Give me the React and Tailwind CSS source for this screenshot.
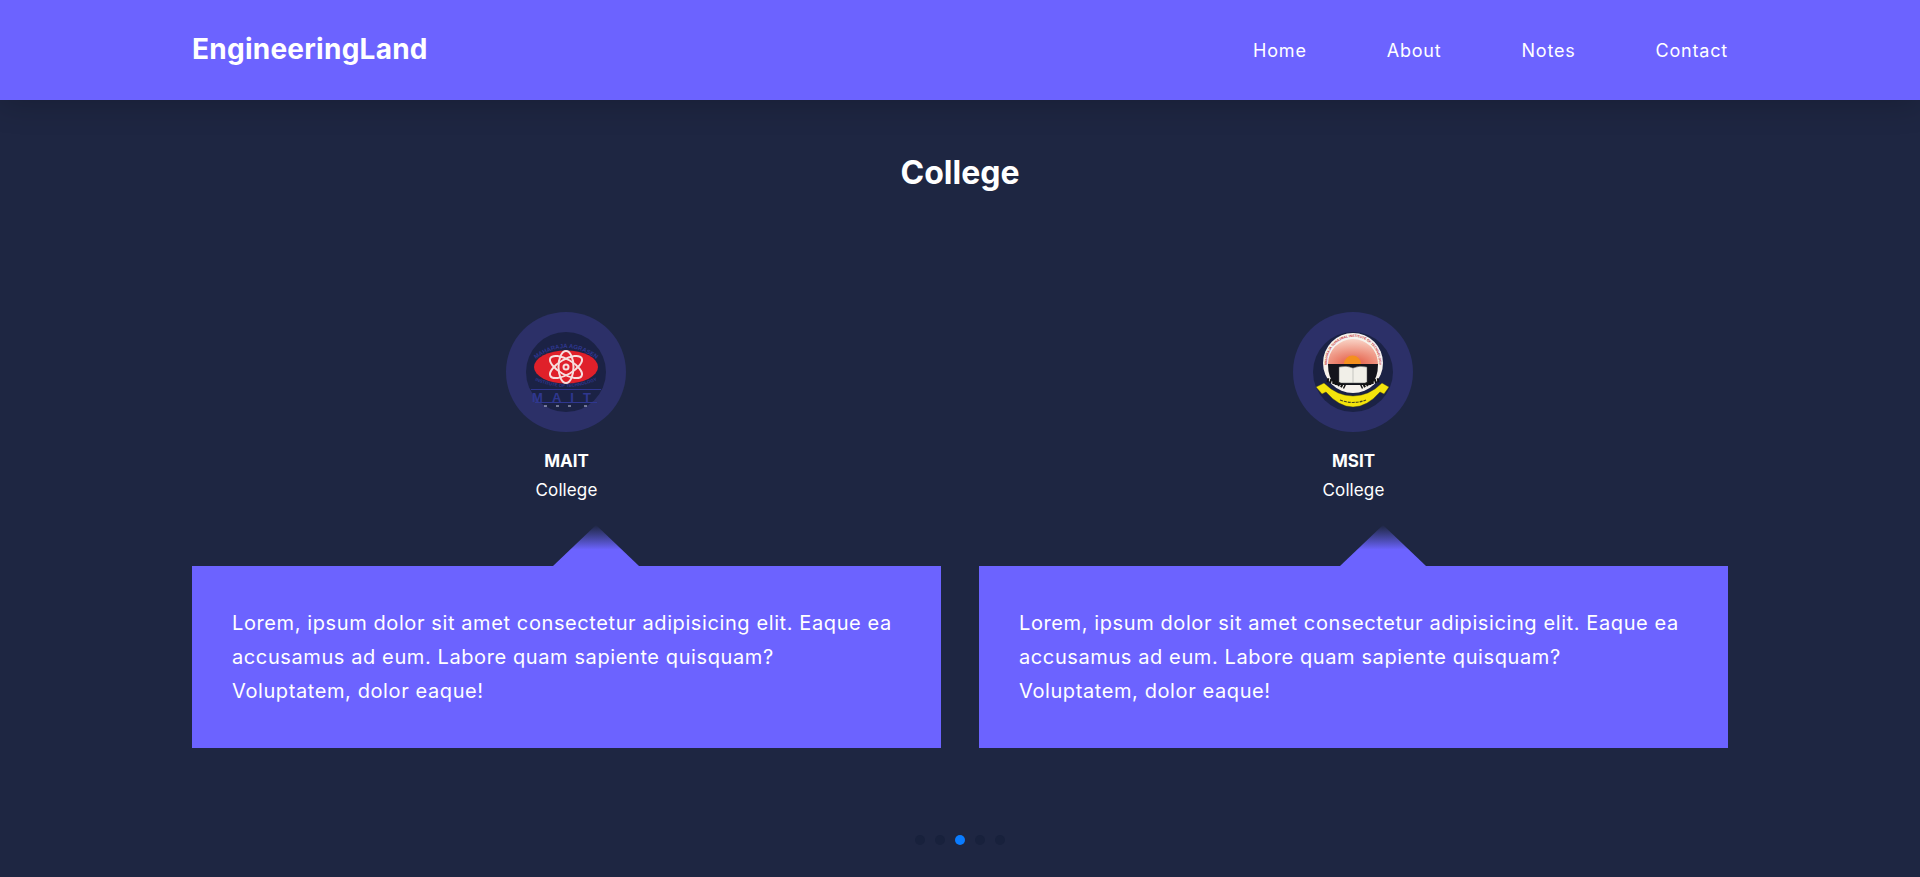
import React from "react";

const FONT = "font-['Inter','Noto_Sans',sans-serif]";

const NAV = ["Home", "About", "Notes", "Contact"];

const COLLEGES = [
  { name: "MAIT", logo: MaitLogo },
  { name: "MSIT", logo: MsitLogo },
];

function MaitLogo() {
  return (
    <svg viewBox="0 0 80 80" className="w-20 h-20">
      <circle cx="40" cy="40" r="40" fill="#1b2245" />
      <path id="mait-top" d="M6 30 Q40 2 74 30" fill="none" />
      <text fontSize="6" fontWeight="700" fill="#2f378f" fontFamily="Liberation Sans, sans-serif">
        <textPath href="#mait-top" startOffset="50%" textAnchor="middle">MAHARAJA AGRASEN</textPath>
      </text>
      <path id="mait-bottom" d="M8 48 Q40 62 72 48" fill="none" />
      <text fontSize="4.5" fontWeight="700" fill="#2f378f" fontFamily="Liberation Sans, sans-serif">
        <textPath href="#mait-bottom" startOffset="50%" textAnchor="middle">INSTITUTE OF TECHNOLOGY</textPath>
      </text>
      <ellipse cx="40" cy="35" rx="32" ry="16.5" fill="#e0202a" />
      <g fill="none" stroke="#f6dede" strokeWidth="2">
        <ellipse cx="40" cy="35" rx="7.5" ry="16" />
        <ellipse cx="40" cy="35" rx="7.5" ry="18" transform="rotate(60 40 35)" />
        <ellipse cx="40" cy="35" rx="7.5" ry="18" transform="rotate(-60 40 35)" />
        <circle cx="40" cy="35" r="2.5" />
      </g>
      <rect x="5" y="57" width="70" height="1" fill="#2f378f" />
      <text x="40" y="69.5" textAnchor="middle" fontSize="13" fontWeight="700" letterSpacing="9" fill="#2f378f" fontFamily="Liberation Sans, sans-serif">MAIT</text>
      <rect x="9" y="70" width="62" height="1" fill="#2f378f" />
      <path d="M18 74 h3 M30 74 h3 M42 74 h3 M58 74 h3" stroke="#c8cbe8" strokeWidth="1" />
    </svg>
  );
}

function MsitLogo() {
  return (
    <svg viewBox="0 0 80 80" className="w-20 h-20">
      <defs>
        <radialGradient id="msit-sky" cx="50%" cy="100%" r="100%">
          <stop offset="20%" stopColor="#e8705a" />
          <stop offset="100%" stopColor="#f9d3c6" />
        </radialGradient>
      </defs>
      <circle cx="40" cy="40" r="40" fill="#1b2245" />
      <circle cx="40" cy="31" r="30" fill="#f7f2ed" />
      <path d="M15 32 A25 25 0 0 1 65 32 Z" fill="url(#msit-sky)" />
      <path id="msit-ring" d="M15 38 A26 26 0 1 1 65 38" fill="none" />
      <text fontSize="3.3" fontWeight="700" fill="#c6353a" fontFamily="Liberation Sans, sans-serif">
        <textPath href="#msit-ring" startOffset="50%" textAnchor="middle">MAHARAJA SURAJMAL INSTITUTE OF TECHNOLOGY</textPath>
      </text>
      <path d="M31 32 A8.5 8.5 0 0 1 48 32 Z" fill="#f4901e" />
      <path d="M15 32 H65 Q65 46 58 53 H22 Q15 46 15 32 Z" fill="#14141c" />
      <path d="M26 35 Q34 33 40 36 Q46 33 54 35 V51 H26 Z" fill="#f1efe8" stroke="#555" strokeWidth="0.5" />
      <path d="M40 36 V51" stroke="#999" strokeWidth="0.5" />
      <path d="M14 48 Q22 50 32 55 M66 48 Q58 50 48 55" stroke="#111" strokeWidth="4" strokeDasharray="2 1" fill="none" />
      <path d="M3 55 L11 51 Q24 64 40 64 Q56 64 69 51 L76 55 L71 62 L67 60 Q54 75 40 75 Q26 75 13 60 L9 62 Z" fill="#f4e40c" stroke="#3a3a14" strokeWidth="0.4" />
      <path d="M27 68 Q40 73 53 68" stroke="#4a4a20" strokeWidth="1.2" strokeDasharray="3 1" fill="none" />
    </svg>
  );
}

function CollegeCard({ name, logo: Logo }) {
  return (
    <div className="flex flex-col items-center">
      <div className="mr-px w-[120px] h-[120px] rounded-full bg-[#2c3068] flex items-center justify-center">
        <Logo />
      </div>
      <div className="mt-4 text-[17px] leading-[26px] font-bold text-white">{name}</div>
      <div className="mt-[3px] text-[17px] leading-[26px] text-white tracking-[0.1px]">College</div>
      <div className="relative mt-[63px] w-full bg-[#6c63ff] px-10 py-10 text-[20px] leading-[34px] tracking-[0.6px] text-white">
        <div className="absolute left-[361px] -top-[41px] w-[86px] h-[41px] bg-gradient-to-b from-[#1e2642] via-[#6c63ff] via-60% to-[#6c63ff] [clip-path:polygon(50%_0,100%_100%,0_100%)]" />
        Lorem, ipsum dolor sit amet consectetur adipisicing elit. Eaque ea accusamus ad eum. Labore quam sapiente quisquam?
        <br />
        Voluptatem, dolor eaque!
      </div>
    </div>
  );
}

export default function App() {
  return (
    <div className={`${FONT} min-h-[877px] bg-[#1e2642] text-white`}>
      <header className="relative h-[100px] bg-[#6c63ff] shadow-[0_4px_30px_rgba(0,0,0,0.2)]">
        <div className="w-[80%] h-full mx-auto flex items-center justify-between">
          <a className="pb-[2px] text-[28px] font-bold tracking-[0.25px]">EngineeringLand</a>
          <nav className="flex gap-20 text-[18px] tracking-[0.8px]">
            {NAV.map((item) => (
              <a key={item}>{item}</a>
            ))}
          </nav>
        </div>
      </header>

      <main className="relative w-[80%] mx-auto">
        <h1 className="pt-[53px] text-center text-[32px] leading-[40px] font-bold">College</h1>
        <div className="mt-[119px] grid grid-cols-2 gap-[38px]">
          {COLLEGES.map((c) => (
            <CollegeCard key={c.name} {...c} />
          ))}
        </div>
        <div className="mt-[87px] flex justify-center gap-[10px]">
          {[0, 1, 2, 3, 4].map((i) => (
            <span key={i} className={`w-[10px] h-[10px] rounded-full ${i === 2 ? "bg-[#0a7cff]" : "bg-[#18213c]"}`} />
          ))}
        </div>
      </main>
    </div>
  );
}
